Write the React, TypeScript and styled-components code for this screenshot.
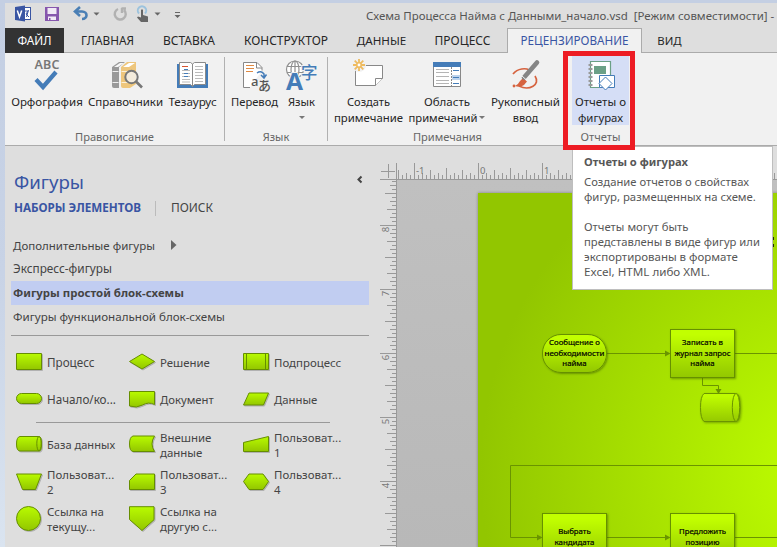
import React from "react";
import styled, { createGlobalStyle } from "styled-components";

const Global = createGlobalStyle`
  * { box-sizing: border-box; }
  body { margin: 0; overflow: hidden; font-family: "Noto Sans", "Open Sans", sans-serif; }
  svg { display: block; flex: none; }
`;

const Desktop = styled.div`
  width: 777px; height: 547px; padding: 3px 0 0 5px; overflow: hidden;
  background: linear-gradient(#c4cfe3, #c8d3e6 50%, #dae4f0);
`;
const Window = styled.div`
  display: flex; flex-direction: column; width: 772px; height: 544px;
  background: #dedede; color: #444; position: relative;
`;
const Text = styled.span<{ $size?: number; $bold?: boolean; $color?: string }>`
  font-size: ${p => p.$size ?? 11.5}px;
  font-weight: ${p => (p.$bold ? 700 : 400)};
  color: ${p => p.$color ?? "inherit"};
  white-space: pre;
`;

/* Title bar */
const TitleBar = styled.header`
  display: flex; height: 25px; flex: none; line-height: 25px;
`;
const QuickAccess = styled.div`width: 361px;`;
const Title = styled.div`
  display: flex; gap: 6px; white-space: nowrap; color: #555;
`;

/* Tabs */
const TabBar = styled.nav`
  display: flex; height: 25px; flex: none; line-height: 25px; color: #262626;
  box-shadow: inset 0 -1px #ababab;
`;
const Tab = styled.div<{ $w: number; $kind?: "file" | "active" }>`
  display: flex; justify-content: center; width: ${p => p.$w}px; height: 25px; flex: none;
  ${p => p.$kind === "file" && "background:#333; color:#fff;"}
  ${p => p.$kind === "active" && "background:#f1f1f1; color:#3955a3; border:1px solid #ababab; border-bottom:0; line-height:23px;"}
`;

/* Ribbon */
const Ribbon = styled.section`
  display: flex; height: 93px; flex: none; background: #f1f1f1; color: #262626;
  border-bottom: 1px solid #ababab;
`;
const Group = styled.div<{ $w: number; $pad?: number }>`
  display: flex; flex-direction: column; flex: none; width: ${p => p.$w}px;
  padding: 3px 0 0 ${p => p.$pad ?? 0}px;
`;
const Divider = styled.div`width: 1px; height: 84px; margin-top: 4px; background: #b1b1b1; flex: none;`;
const Commands = styled.div`display: flex; height: 69px;`;
const Command = styled.button<{ $w: number; $on?: boolean }>`
  display: flex; flex-direction: column; align-items: center; flex: none;
  width: ${p => p.$w}px; height: 69px; padding: 3px 0 0; border: 0;
  background: ${p => (p.$on ? "#d5def6" : "transparent")};
  font-family: inherit; color: #262626; line-height: 16px;
`;
const CommandLabel = styled.span`
  display: flex; flex-direction: column; align-items: center; padding-top: 3px;
`;
const WithArrow = styled.span`display: flex; align-items: center; gap: 2px; height: 16px;`;
const Caret = styled.i`
  width: 0; height: 0; border: 3px solid transparent; border-top-color: #777; border-bottom: 0;
  margin-bottom: 2px;
`;
const GroupName = styled.div`
  line-height: 16px; padding-top: 2px; text-align: center; color: #666;
`;
const Highlight = styled.div`
  position: absolute; left: 558px; top: 48px; width: 72px; height: 99px;
  border: 5px solid #ed1c24;
`;

/* Shapes pane */
const Workspace = styled.main`display: flex; flex: 1; min-height: 0;`;
const Pane = styled.aside`
  display: flex; flex-direction: column; width: 375px; flex: none; padding: 23px 11px 0 6px;
`;
const PaneHead = styled.div`
  display: flex; justify-content: space-between; height: 27px; line-height: 26px; padding: 0 1px 0 3px;
`;
const PaneTabs = styled.div`
  display: flex; height: 24px; align-items: center; padding-left: 3px; line-height: 24px;
`;
const PaneRule = styled.i`width: 1px; height: 15px; margin: 0 15px 0 14px; background: #bbb;`;
const StencilList = styled.div`
  display: flex; flex-direction: column; padding-top: 15px; height: 116px; flex: none;
  border-bottom: 1px solid #999;
`;
const Stencil = styled.div<{ $h: number; $on?: boolean }>`
  display: flex; align-items: center; gap: 16px; flex: none; height: ${p => p.$h}px;
  padding: 0 0 2px 2px;
  background: ${p => (p.$on ? "#c1cdf1" : "transparent")};
`;
const ShapeGrid = styled.div<{ $rows: string; $pad: string }>`
  display: grid; grid-template-columns: 113px 114px 115px; grid-template-rows: ${p => p.$rows};
  padding: ${p => p.$pad};
`;
const ShapeItem = styled.div`display: flex; align-items: center; gap: 5px; line-height: 15px;`;
const ShapeName = styled.span`display: flex; flex-direction: column; padding-top: 1px;`;
const ShapeRule = styled.div`width: 294px; height: 1px; margin-left: 25px; background: #999; flex: none;`;

/* Drawing area */
const Drawing = styled.div`
  display: grid; grid-template: 34px 367px / 17px 380px; flex: 1; overflow: hidden;
`;
const Canvas = styled.div`
  position: relative; overflow: hidden; background: linear-gradient(#c0c0c0, #b8b8b8);
`;
const Page = styled.div`
  position: absolute; left: 81px; top: 13px; width: 400px; height: 400px;
  box-shadow: 0 0 3px #0005;
  background: radial-gradient(circle at 367px 280px, #c0ff00 0, #baf900 60px, #92c600 365px);
`;
const Lines = styled.svg`position: absolute; left: 0; top: 0;`;
const Node = styled.div<{ $x: number; $y: number; $h: number; $r?: number; $pt: number; $line: number }>`
  position: absolute; left: ${p => p.$x}px; top: ${p => p.$y}px; width: 65px; height: ${p => p.$h}px;
  display: flex; flex-direction: column; align-items: center; padding-top: ${p => p.$pt}px;
  border: 1px solid #669000; border-radius: ${p => p.$r ?? 0}px;
  background: linear-gradient(#c2ff00 10%, #93c800);
  box-shadow: 1px 1px 2px #4a6a0099; line-height: ${p => p.$line}px; color: #000;
  -webkit-text-stroke: 0.2px #000;
`;
const Tooltip = styled.div`
  position: absolute; left: 567px; top: 143px; width: 201px; height: 144px; padding: 6px 0 0 11px;
  display: flex; flex-direction: column; line-height: 15px;
  background: #fff; border: 1px solid #bebebe; color: #575757;
`;
const TipTitle = styled.div`height: 21px;`;
const TipGap = styled.div`height: 15px;`;

const QatIcons = () => (
  <svg width="361" height="25" viewBox="5 3 361 25">
    <rect x="20" y="7.500" width="10.500" height="12" fill="#fff" stroke="#3955a3" />
    <path d="M24.500 11h3.500l-2 3 3 3M28.500 10l-2 7" stroke="#3955a3" fill="none" />
    <path d="M15 7l10-1.500v16L15 20z" fill="#3955a3" />
    <path d="M17.300 10.500l2.200 6.500 2.200-6.500" stroke="#fff" strokeWidth="1.500" fill="none" />
    <path d="M45 7h14v14H45z" fill="#8656ad" />
    <path d="M47.500 8h9v6h-9zM48 16.500h8V20h-5.500v-2H49v2h-1z" fill="#f1e9f6" />
    <path d="M80 7l-5 4.500 5 4.500M75 11.500h7c6 0 6 7.500 0 7.500" stroke="#4a7fb5" strokeWidth="2.600" fill="none" />
    <path d="M93.500 12.500h6l-3 3zM154.500 12.500h6l-3 3zM174.500 15h6l-3 3zM175 12h5v1h-5z" fill="#666" />
    <path d="M118 9a5.500 5.500 0 1 0 6 1M121.500 8.500h4.500M122 8v5" stroke="#b1b1b1" strokeWidth="2.400" fill="none" />
    <path d="M139 13.500a4.200 4.200 0 1 1 6 0" stroke="#9cc3de" strokeWidth="2" fill="none" />
    <path d="M141 10q1-1.500 2 0v5l5 1.500V22h-7l-4-4.500 1-1 3 1z" fill="#666" />
  </svg>
);

const Ico = ({ children }: { children: React.ReactNode }) => (
  <svg width="32" height="32" viewBox="0 0 32 32" fill="none" overflow="visible">{children}</svg>
);

const SpellIcon = () => (
  <Ico>
    <text x="3.500" y="10" fontSize="12.500" fontWeight="600" textLength="25" fill="#777" fontFamily="Noto Sans, sans-serif">ABC</text>
    <path d="M5 20.500l7 7.500L25 13" stroke="#447cb8" strokeWidth="4.200" />
  </Ico>
);
const BooksIcon = () => (
  <Ico>
    <path d="M2 8l7-5h6l-6 5v21H4q-2 0-2-2z" fill="#999" />
    <path d="M4 8l6-4h4L8 8z" fill="#f7f7f7" />
    <path d="M2.500 12.500h6M2.500 23.500h6" stroke="#eee" />
    <path d="M11 8l6-5h9v22l-6 4h-7q-2 0-2-2z" fill="#eec67c" />
    <path d="M13 8l6-4h6l-6 4z" fill="#fff" />
    <path d="M11.500 12.500h8M11.500 23.500h8" stroke="#fbf0d8" />
    <circle cx="21.500" cy="18" r="6.200" fill="#f4f4f4cc" stroke="#777" strokeWidth="2" />
    <path d="M26 22.500l6 6" stroke="#777" strokeWidth="2.600" />
  </Ico>
);
const BookIcon = () => (
  <Ico>
    <path d="M0 5h31v24H0z" fill="#447cb8" />
    <path d="M2.500 3.500h11l2 1.500 2-1.500h11v22h-11l-2 2-2-2h-11zM15.500 5v22" fill="#fff" stroke="#8a8a8a" />
    <path d="M5 11.500h8M5 14.500h8M5 17.500h8M5 20.500h8M5 23h8M18 7.500h8M18 10.500h8M18 13.500h8M18 16.500h8M18 19.500h8M18 22.500h8" stroke="#bbb" />
    <path d="M5 7.500h6" stroke="#d65532" />
    <path d="M7 10.500h4M7 14.500h4M7 17.500h4" stroke="#447cb8" />
  </Ico>
);
const TranslateIcon = () => (
  <Ico>
    <path d="M11 28.500H4.500v-25H18l5 5v3" fill="#fff" stroke="#888" />
    <path d="M17.500 3.500v5.500H23" stroke="#888" />
    <path d="M7 6.500h8M7 9.500h8M7 12.500h7" stroke="#e08a42" />
    <path d="M18 14q4-3 7 1v4M22 16l3 3 2.500-3.500" stroke="#447cb8" strokeWidth="1.500" />
    <text x="12" y="26.500" fontSize="13" fill="#555" fontWeight="500" fontFamily="Noto Sans, sans-serif">a</text>
    <text x="19" y="31" fontSize="13" fill="#555" fontWeight="500" fontFamily="Noto Sans CJK JP, sans-serif">あ</text>
  </Ico>
);
const LanguageIcon = () => (
  <Ico>
    <g stroke="#909090" strokeWidth="1.200">
      <circle cx="9" cy="10.500" r="8.500" fill="#fff" />
      <ellipse cx="9" cy="10.500" rx="4" ry="8.500" />
      <path d="M1 7.500h16M1 13.500h16M9 2v17" />
    </g>
    <text x="0" y="31" fontSize="24" textLength="17" lengthAdjust="spacingAndGlyphs" fontWeight="700" fill="#447cb8" stroke="#f1f1f1" strokeWidth="2" paintOrder="stroke" fontFamily="Noto Sans, sans-serif">A</text>
    <text x="15" y="20" fontSize="16.500" fontWeight="500" fill="#447cb8" stroke="#f1f1f1" strokeWidth="2" paintOrder="stroke" fontFamily="Noto Sans CJK SC, sans-serif">字</text>
  </Ico>
);
const NewNoteIcon = () => (
  <Ico>
    <path d="M2.500 6.500h27v13l-7 7h-20z" fill="#fff" stroke="#888" />
    <path d="M22.500 26.500v-7h7" stroke="#888" fill="#fff" />
    <circle cx="6" cy="6" r="7" fill="#f1f1f1" />
    <path d="M6 0v12M0 6h12M1.700 1.700l8.600 8.600M10.300 1.700l-8.600 8.600" stroke="#eebb60" strokeWidth="1.800" />
    <circle cx="6" cy="6" r="2.200" fill="#fff" stroke="#eebb60" strokeWidth="1.500" />
  </Ico>
);
const NotePaneIcon = () => (
  <Ico>
    <path d="M2.500 3.500h27v24h-27z" fill="#fff" stroke="#888" />
    <path d="M2 3h28v5H2z" fill="#447cb8" />
    <path d="M5 10.500h13M5 13.500h13M5 17.500h13M5 21.500h13M5 24.500h13" stroke="#b5b5b5" />
    <path d="M20.500 8v20" stroke="#888" strokeDasharray="2 1" />
    <path d="M21 16h8v5h-8z" fill="#bdd3ec" />
    <path d="M22 11.500h6M22 18.500h6M22 24.500h6" stroke="#447cb8" />
  </Ico>
);
const InkIcon = () => (
  <Ico>
    <path d="M3 15C8 9 16 9 19 11M25 17C31 26 19 32 9 27" stroke="#d6633f" strokeWidth="1.700" />
    <path d="M5 27q3-1 5-5l3-3 4 3.500-3 3.500q-4 3-9 1z" fill="#d6633f" />
    <path d="M14 18.500L27 3.500" stroke="#858585" strokeWidth="4.600" strokeLinecap="round" />
    <path d="M12 17l5 4.500" stroke="#f1f1f1" />
    <circle cx="4" cy="27" r="1.400" fill="#d6633f" />
  </Ico>
);
const ReportIcon = () => (
  <Ico>
    <path d="M5.500 2.500h20v26h-20z" fill="#fff" stroke="#6ba086" strokeWidth="1.200" />
    <path d="M3.500 6h4M3.500 10h4M3.500 14h4M3.500 18h4M3.500 22h4M3.500 26h4" stroke="#999" strokeWidth="1.800" />
    <path d="M9 7h12v8H9z" fill="#6ba086" />
    <path d="M14.500 16.500h15v12h-15z" fill="#fff" stroke="#447cb8" />
    <path d="M20.500 18l6.500 6.500-6.500 6.500-6.500-6.500z" fill="#fff" stroke="#447cb8" />
  </Ico>
);

const tabs: { name: string; w: number; size: number; kind?: "file" | "active" }[] = [
  { name: "ФАЙЛ", w: 59, size: 11.83, kind: "file" },
  { name: "ГЛАВНАЯ", w: 87, size: 11.8 },
  { name: "ВСТАВКА", w: 76, size: 12 },
  { name: "КОНСТРУКТОР", w: 118, size: 11.94 },
  { name: "ДАННЫЕ", w: 73, size: 11.6 },
  { name: "ПРОЦЕСС", w: 89, size: 12 },
  { name: "РЕЦЕНЗИРОВАНИЕ", w: 135, size: 11.7, kind: "active" },
  { name: "ВИД", w: 55, size: 11.4 },
];

/* Stencil glyphs, each drawn in a 26 x 26 box */
const glyphs: Record<string, React.ReactNode> = {
  process: <path d="M.5 4.500h25v16H.5z" />,
  decision: <path d="M13 5l12.500 7.500L13 20 .5 12.500z" />,
  sub: <><path d="M.5 4.500h25v16H.5z" /><path d="M3.500 4.500v16M22.500 4.500v16" /></>,
  terminator: <rect x=".5" y="7.500" width="25" height="10" rx="5" />,
  document: <path d="M.5 5.500h25v13q-6-3-12 .5-6 3.500-13 1z" />,
  data: <path d="M6 7h19.500l-5 12H.5z" />,
  db: <><path d="M4 5.500h19q2.500 0 2.500 7.500T23 20H4Q.5 20 .5 13T4 5.500z" /><ellipse cx="23" cy="12.700" rx="2.200" ry="7.200" /></>,
  external: <path d="M4 5h21.500q-5 8 0 15.500H4Q.5 20 .5 13T4 5z" />,
  manual: <path d="M.5 11.500l25-6v15H.5z" />,
  trapezoid: <path d="M.5 5h25l-6 15.500h-13z" />,
  card: <path d="M7 5h18.500v15.500H.5v-9z" />,
  hexagon: <path d="M6 5h14l5.500 7.500-5.500 8H6l-5.500-8z" />,
  circle: <circle cx="12.500" cy="12.500" r="12" />,
  offpage: <path d="M.5 .7h24.500v13L13 24.500.5 13.500z" />,
};
const Glyph = ({ kind }: { kind: string }) => (
  <svg width="26" height="26" viewBox="0 0 26 26" overflow="visible">
    <defs>
      <linearGradient id={`g-${kind}`} x1="0" y1="0" x2="0" y2="1">
        <stop offset="0" stopColor="#b9fb00" /><stop offset="1" stopColor="#93c600" />
      </linearGradient>
    </defs>
    <g fill={`url(#g-${kind})`} stroke="#668e00" filter="drop-shadow(1px 1px 0.5px #0003)">{glyphs[kind]}</g>
  </svg>
);
type Item = [string, string[]];
const basic: Item[] = [
  ["process", ["Процесс"]], ["decision", ["Решение"]], ["sub", ["Подпроцесс"]],
  ["terminator", ["Начало/ко..."]], ["document", ["Документ"]], ["data", ["Данные"]],
];
const extra: Item[] = [
  ["db", ["База данных"]], ["external", ["Внешние", "данные"]], ["manual", ["Пользоват...", "1"]],
  ["trapezoid", ["Пользоват...", "2"]], ["card", ["Пользоват...", "3"]], ["hexagon", ["Пользоват...", "4"]],
  ["circle", ["Ссылка на", "текущу..."]], ["offpage", ["Ссылка на", "другую с..."]],
];
const sizeOf: Record<string, number> = {
  "База данных": 11.1, "Решение": 11.4, "Процесс": 11.7, "Начало/ко...": 11.68, "Документ": 11.3, "Данные": 11.3,
};
const Shapes = ({ items, rows, pad }: { items: Item[]; rows: string; pad: string }) => (
  <ShapeGrid $rows={rows} $pad={pad}>
    {items.map(([kind, lines], i) => (
      <ShapeItem key={i}>
        <Glyph kind={kind} />
        <ShapeName>{lines.map(l => <Text key={l} $size={sizeOf[l] ?? 11.45}>{l}</Text>)}</ShapeName>
      </ShapeItem>
    ))}
  </ShapeGrid>
);

const step = (k: number) => {
  const m = ((k % 16) + 16) % 16;
  return m === 0 ? 16 : m === 8 ? 11 : m % 4 === 0 ? 9 : m % 2 === 0 ? 6 : 4;
};
const range = (a: number, b: number) => Array.from({ length: b - a + 1 }, (_, i) => a + i);

const TopRuler = () => (
  <svg width="380" height="34" viewBox="397 146 380 34" shapeRendering="crispEdges">
    <path d={range(-20, 74).map(k => `M${478.5 + k * 4} 179v-${step(k)}`).join("") + "M397 179.500h380"} stroke="#999" />
    {[-1, 0, 1].map(n => (
      <text key={n} x={478 + n * 64 + 2} y="173.500" fontSize="9.500" fill="#777" fontFamily="Noto Sans, sans-serif">{n}</text>
    ))}
  </svg>
);
const Corner = () => (
  <svg width="17" height="34" viewBox="380 146 17 34" shapeRendering="crispEdges">
    <path d="M381 171.500h14M388.500 164v14M380 179.500h17M396.500 163v17" stroke="#999" />
  </svg>
);
const SideRuler = () => (
  <svg width="17" height="367" viewBox="380 180 17 367" shapeRendering="crispEdges" overflow="visible">
    <path d={range(-11, 80).map(k => `M396 ${225.5 + k * 4}h-${step(k)}`).join("") + "M396.500 180v367"} stroke="#999" />
    {[8, 7, 6, 5, 4].map((n, i) => (
      <text key={n} transform={`translate(388.700 ${232.300 + i * 64}) rotate(-90)`} fontSize="9.500" fill="#777" fontFamily="Noto Sans, sans-serif">{n}</text>
    ))}
  </svg>
);

const Connectors = () => (
  <Lines width="380" height="367" viewBox="397 180 380 367">
    <defs>
      <linearGradient id="drum" x1="0" y1="0" x2="0" y2="1">
        <stop offset=".1" stopColor="#bffc00" /><stop offset="1" stopColor="#95c900" />
      </linearGradient>
    </defs>
    <path fill="none" stroke="#6a9400" d="M607 353.500h59M735 353.500h42M702.500 378v7.500h16v5M777 465.500H510.500v72h28M607 537.500h59M735 537.500h42" />
    <path fill="#6a9400" d="M665 350.500l5.500 3-5.500 3zM537 534.500l5.500 3-5.500 3zM665 534.500l5.500 3-5.500 3zM715.500 389h6l-3 5z" />
    <g stroke="#6a9400" fill="url(#drum)" filter="drop-shadow(1px 1px 1px #4a6a0088)">
      <path d="M704 393.500h32q4 0 4 14t-4 14h-32q-3.500-3-3.500-14t3.500-14z" />
      <ellipse cx="736" cy="407.500" rx="3.700" ry="14" />
    </g>
    <path d="M773 237h1v3h-1zM773 244h1v3h-1z" fill="#223300" />
  </Lines>
);

export default function App() {
  return (
    <Desktop>
      <Global />
      <Window>
        <TitleBar>
          <QuickAccess><QatIcons /></QuickAccess>
          <Title>
            <Text $size={11.45}>Схема Процесса Найма с Данными_начало.vsd</Text>
            <Text $size={11.48}>[Режим совместимости] -</Text>
          </Title>
        </TitleBar>
        <TabBar>
          {tabs.map(t => (
            <Tab key={t.name} $w={t.w} $kind={t.kind}><Text $size={t.size}>{t.name}</Text></Tab>
          ))}
        </TabBar>
        <Ribbon>
          <Group $w={219}>
            <Commands>
              <Command $w={84}><SpellIcon /><CommandLabel><Text>Орфография</Text></CommandLabel></Command>
              <Command $w={73}><BooksIcon /><CommandLabel><Text>Справочники</Text></CommandLabel></Command>
              <Command $w={61}><BookIcon /><CommandLabel><Text $size={11.6}>Тезаурус</Text></CommandLabel></Command>
            </Commands>
            <GroupName><Text $size={11.1}>Правописание</Text></GroupName>
          </Group>
          <Divider />
          <Group $w={102}>
            <Commands>
              <Command $w={59}><TranslateIcon /><CommandLabel><Text $size={11.2}>Перевод</Text></CommandLabel></Command>
              <Command $w={35}><LanguageIcon /><CommandLabel><Text $size={11.2}>Язык</Text><WithArrow><Caret /></WithArrow></CommandLabel></Command>
            </Commands>
            <GroupName><Text $size={11}>Язык</Text></GroupName>
          </Group>
          <Divider />
          <Group $w={239}>
            <Commands>
              <Command $w={81}><NewNoteIcon /><CommandLabel><Text $size={11.1}>Создать</Text><Text $size={11.36}>примечание</Text></CommandLabel></Command>
              <Command $w={76}><NotePaneIcon /><CommandLabel><Text>Область</Text><WithArrow><Text $size={11.23}>примечаний</Text><Caret /></WithArrow></CommandLabel></Command>
              <Command $w={81}><InkIcon /><CommandLabel><Text $size={11.6}>Рукописный</Text><Text $size={11}>ввод</Text></CommandLabel></Command>
            </Commands>
            <GroupName><Text $size={11.08}>Примечания</Text></GroupName>
          </Group>
          <Group $w={62} $pad={5}>
            <Commands>
              <Command $w={57} $on><ReportIcon /><CommandLabel><Text>Отчеты о</Text><Text $size={11.36}>фигурах</Text></CommandLabel></Command>
            </Commands>
            <GroupName><Text $size={11.17}>Отчеты</Text></GroupName>
          </Group>
        </Ribbon>
        <Workspace>
          <Pane>
            <PaneHead>
              <Text $size={18.66} $color="#3955a3">Фигуры</Text>
              <svg width="12" height="20" viewBox="0 0 12 20"><path d="M5.500 7.500L2.500 10.500l3 3" stroke="#444" strokeWidth="2" fill="none" /></svg>
            </PaneHead>
            <PaneTabs>
              <Text $size={11.65} $bold $color="#3955a3">НАБОРЫ ЭЛЕМЕНТОВ</Text>
              <PaneRule />
              <Text $size={11.95}>ПОИСК</Text>
            </PaneTabs>
            <StencilList>
              <Stencil $h={22}>
                <Text>Дополнительные фигуры</Text>
                <svg width="6" height="10" viewBox="0 0 6 10"><path d="M0 0l5.500 5L0 10z" fill="#666" /></svg>
              </Stencil>
              <Stencil $h={24}><Text $size={11.8}>Экспресс-фигуры</Text></Stencil>
              <Stencil $h={24} $on><Text $size={11.4} $bold>Фигуры простой блок-схемы</Text></Stencil>
              <Stencil $h={24}><Text $size={11.6}>Фигуры функциональной блок-схемы</Text></Stencil>
            </StencilList>
            <Shapes items={basic} rows="37px 37px" pad="7px 0 5px 5px" />
            <ShapeRule />
            <Shapes items={extra} rows="38px 37px 37px" pad="2px 0 0 5px" />
          </Pane>
          <Drawing>
            <Corner /><TopRuler /><SideRuler />
            <Canvas>
              <Page />
              <Connectors />
              <Node $x={145} $y={154} $h={39} $r={19} $pt={2} $line={10.6}>
                <Text $size={7.8}>Сообщение о</Text><Text $size={7.92}>необходимости</Text><Text $size={7.8}>найма</Text>
              </Node>
              <Node $x={273} $y={149} $h={49} $pt={7} $line={10.6}>
                <Text $size={7.8}>Записать в</Text><Text $size={7.74}>журнал запрос</Text><Text $size={7.8}>найма</Text>
              </Node>
              <Node $x={145} $y={333} $h={49} $pt={12} $line={11}>
                <Text $size={7.8}>Выбрать</Text><Text $size={7.87}>кандидата</Text>
              </Node>
              <Node $x={273} $y={333} $h={49} $pt={12} $line={11}>
                <Text $size={7.75}>Предложить</Text><Text $size={7.8}>позицию</Text>
              </Node>
            </Canvas>
          </Drawing>
        </Workspace>
        <Tooltip>
          <TipTitle><Text $size={11.17} $bold>Отчеты о фигурах</Text></TipTitle>
          <Text $size={11.24}>Создание отчетов о свойствах</Text>
          <Text $size={11.34}>фигур, размещенных на схеме.</Text>
          <TipGap />
          <Text $size={11.3}>Отчеты могут быть</Text>
          <Text $size={11.25}>представлены в виде фигур или</Text>
          <Text $size={11.48}>экспортированы в формате</Text>
          <Text $size={11.64}>Excel, HTML либо XML.</Text>
        </Tooltip>
        <Highlight />
      </Window>
    </Desktop>
  );
}
